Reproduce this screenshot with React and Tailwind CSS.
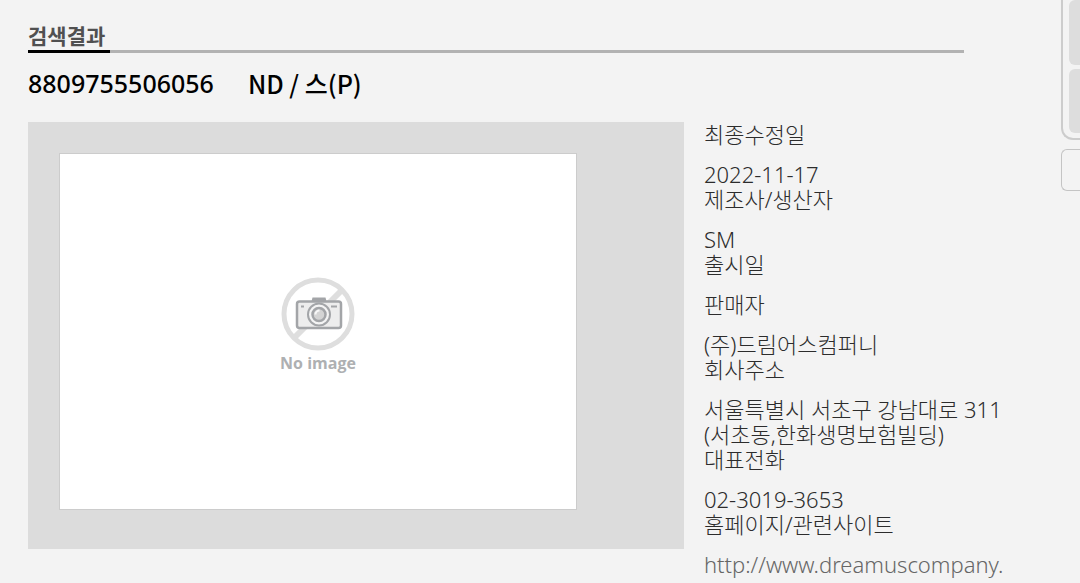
const details = [
  { label: "최종수정일", value: "2022-11-17" },
  { label: "제조사/생산자", value: "SM" },
  { label: "출시일", value: "" },
  { label: "판매자", value: "(주)드림어스컴퍼니" },
  { label: "회사주소", value: "서울특별시 서초구 강남대로 311 (서초동,한화생명보험빌딩)" },
  { label: "대표전화", value: "02-3019-3653" },
];

function NoImageIcon() {
  return (
    <svg viewBox="0 0 74 74" className="size-[74px]" fill="none" aria-hidden="true">
      <circle cx="37" cy="37" r="34" stroke="#dedede" strokeWidth="5" />
      <path d="M13 61 61 13" stroke="#dedede" strokeWidth="6" />
      <rect x="16" y="24.5" width="44" height="26.5" rx="2.5" fill="#ededed" stroke="#a3a5a8" strokeWidth="2.5" />
      <path d="M31.5 20.5h13l1 4h-15z" fill="#a3a5a8" />
      <path d="M20 29.5h3M50 29.5h6" stroke="#a3a5a8" strokeWidth="2" />
      <circle cx="38" cy="37.5" r="11" fill="#f4f4f4" stroke="#a3a5a8" strokeWidth="2" />
      <circle cx="38" cy="37.5" r="6.5" fill="#d4d4d4" stroke="#a3a5a8" strokeWidth="2.5" />
      <path d="M34.5 37.5a4 4 0 0 1 4-4" stroke="#f8f8f8" strokeWidth="2" />
    </svg>
  );
}

export default function App() {
  return (
    <div className="flex h-screen overflow-hidden bg-[#f3f3f3] font-['Noto_Sans','Noto_Sans_CJK_KR',sans-serif] text-[#2c2c2c]">
      <main className="min-w-0 flex-1 pt-6 pl-7">
        <header className="mr-[97px] flex border-b-3 border-[#b2b2b2]">
          <h1 className="-mb-[3px] w-[82px] border-b-3 border-black pb-[2px] text-[21px] leading-6 font-bold text-[#505050]">
            검색결과
          </h1>
        </header>
        <h2 className="mt-[15px] flex gap-[34px] text-[25px] leading-[30px] font-medium text-black">
          <span>8809755506056</span>
          <span className="font-['Noto_Sans_CJK_KR',sans-serif]">ND / 스(P)</span>
        </h2>
        <section className="mt-6 flex items-start gap-5">
          <div className="w-[656px] shrink-0 bg-[#dcdcdc] pt-[31px] pr-[107px] pb-[39px] pl-[31px]">
            <figure className="flex h-[357px] flex-col items-center border border-[#cccccc] bg-white pt-[123px]">
              <NoImageIcon />
              <figcaption className="font-['Open_Sans',sans-serif] text-base leading-6 font-bold text-[#aeb0b2]">No image</figcaption>
            </figure>
          </div>
          <dl className="w-[310px] text-[22px] leading-[25px] font-light">
            {details.map(({ label, value }) => (
              <div key={label}>
                <dt className="mb-[15px]">{label}</dt>
                <dd>{value}</dd>
              </div>
            ))}
            <dt className="mb-[15px]">홈페이지/관련사이트</dt>
            <dd>
              <a href="http://www.dreamuscompany." className="text-[#666666]">http://www.dreamuscompany.</a>
            </dd>
          </dl>
        </section>
      </main>
      <aside className="w-[19px] shrink-0 overflow-hidden">
        <div className="h-[140px] rounded-bl-xl border-b-2 border-l-2 border-[#cccccc] pl-[6px]">
          <div className="h-[65px] rounded-l-md bg-[#dddddd]" />
          <div className="mt-1 h-16 rounded-l-md bg-[#dddddd]" />
        </div>
        <div className="mt-[9px] h-[42px] rounded-l-md border-y border-l border-[#c4c4c4]" />
      </aside>
    </div>
  );
}
